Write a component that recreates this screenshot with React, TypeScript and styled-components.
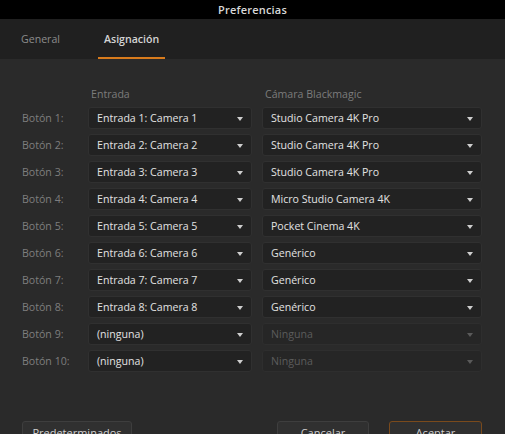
import React from 'react'
import styled, { createGlobalStyle } from 'styled-components'

const GlobalStyle = createGlobalStyle`
  html, body {
    margin: 0;
    padding: 0;
    background: #2a2a2a;
  }
  body {
    font-family: 'Open Sans', 'Noto Sans', sans-serif;
    font-size: 10.6px;
  }
`

const Window = styled.div`
  width: 505px;
  height: 434px;
  display: flex;
  flex-direction: column;
  background: #2a2a2a;
  overflow: hidden;
`

const TitleBar = styled.div`
  height: 19px;
  background: #000;
  color: #d8d8d8;
  font-weight: 600;
  font-size: 11px;
  display: flex;
  align-items: center;
  justify-content: center;
  letter-spacing: 0.2px;
`

const TabBar = styled.div`
  height: 40px;
  background: #202020;
  display: flex;
  align-items: stretch;
  padding-left: 15px;
  gap: 32px;
`

const Tab = styled.div<{ $active?: boolean }>`
  display: flex;
  align-items: center;
  padding: 2px 6px 0;
  color: ${p => (p.$active ? '#d4d4d4' : '#8c8c8c')};
  font-weight: ${p => (p.$active ? 600 : 400)};
  border-bottom: 2px solid ${p => (p.$active ? '#d87b1c' : 'transparent')};
`

const Content = styled.div`
  flex: 1;
  display: flex;
  flex-direction: column;
  padding: 27px 23px 0 22px;
`

const Grid = styled.div`
  display: grid;
  grid-template-columns: 56px 164px 220px;
  column-gap: 10px;
  row-gap: 5px;
  align-items: center;
`

const Header = styled.div`
  color: #7c7c7c;
  padding-left: 3px;
  height: 16px;
  display: flex;
  align-items: center;
`

const Label = styled.div`
  color: #7e7e7e;
  white-space: nowrap;
`

const Select = styled.div<{ $disabled?: boolean }>`
  height: 22px;
  box-sizing: border-box;
  display: flex;
  align-items: center;
  justify-content: space-between;
  padding: 0 8px 0 8px;
  background: ${p => (p.$disabled ? '#262626' : '#222222')};
  border: 1px solid ${p => (p.$disabled ? '#2e2e2e' : '#303030')};
  border-radius: 3px;
  color: ${p => (p.$disabled ? '#5c5c5c' : '#e2e2e2')};
`

const Caret = styled.span<{ $disabled?: boolean }>`
  width: 0;
  height: 0;
  border-left: 3.5px solid transparent;
  border-right: 3.5px solid transparent;
  border-top: 4px solid ${p => (p.$disabled ? '#5a5a5a' : '#cfcfcf')};
  margin-top: 1px;
`

const Footer = styled.div`
  margin-top: auto;
  display: flex;
  align-items: flex-start;
  height: 13px;
  gap: 20px;
`

const Button = styled.div<{ $primary?: boolean; $w: number }>`
  width: ${p => p.$w}px;
  height: 24px;
  box-sizing: border-box;
  border: 1px solid ${p => (p.$primary ? '#7a4a1c' : '#3e3e3e')};
  border-radius: 3px;
  background: #303030;
  color: #cfcfcf;
  font-size: 11px;
  display: flex;
  justify-content: center;
  padding-top: 3px;
`

const Spacer = styled.div`
  flex: 1;
`

type Row = { input: string; camera: string; off?: boolean }

const rows: Row[] = [
  { input: 'Entrada 1: Camera 1', camera: 'Studio Camera 4K Pro' },
  { input: 'Entrada 2: Camera 2', camera: 'Studio Camera 4K Pro' },
  { input: 'Entrada 3: Camera 3', camera: 'Studio Camera 4K Pro' },
  { input: 'Entrada 4: Camera 4', camera: 'Micro Studio Camera 4K' },
  { input: 'Entrada 5: Camera 5', camera: 'Pocket Cinema 4K' },
  { input: 'Entrada 6: Camera 6', camera: 'Genérico' },
  { input: 'Entrada 7: Camera 7', camera: 'Genérico' },
  { input: 'Entrada 8: Camera 8', camera: 'Genérico' },
  { input: '(ninguna)', camera: 'Ninguna', off: true },
  { input: '(ninguna)', camera: 'Ninguna', off: true }
]

const App = () => {
  return (
    <Window>
      <GlobalStyle />
      <TitleBar>Preferencias</TitleBar>
      <TabBar>
        <Tab>General</Tab>
        <Tab $active>Asignación</Tab>
      </TabBar>
      <Content>
        <Grid>
          <div />
          <Header>Entrada</Header>
          <Header>Cámara Blackmagic</Header>
          {rows.map((r, i) => (
            <React.Fragment key={i}>
              <Label>Botón {i + 1}:</Label>
              <Select>
                <span>{r.input}</span>
                <Caret />
              </Select>
              <Select $disabled={r.off}>
                <span>{r.camera}</span>
                <Caret $disabled={r.off} />
              </Select>
            </React.Fragment>
          ))}
        </Grid>
        <Footer>
          <Button $w={110}>Predeterminados</Button>
          <Spacer />
          <Button $w={92}>Cancelar</Button>
          <Button $w={93} $primary>Aceptar</Button>
        </Footer>
      </Content>
    </Window>
  )
}

export default App
